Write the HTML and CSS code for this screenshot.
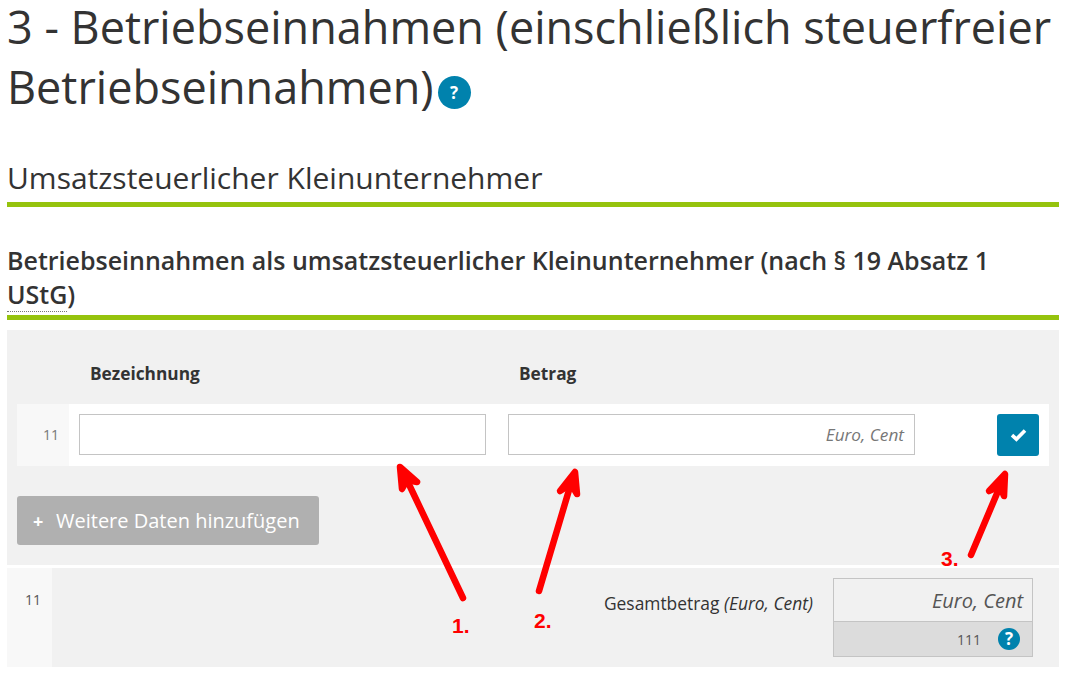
FILE: index.html
```html
<!DOCTYPE html>
<html lang="de">
<head>
    <meta charset="UTF-8">
    <meta name="viewport" content="width=device-width, initial-scale=1.0">
    <title>Betriebseinnahmen</title>
    <link rel="stylesheet" href="styles.css">
</head>
<body>
    <h1>3 - Betriebseinnahmen (einschließlich steuerfreier Betriebseinnahmen)<span class="help help-large">?</span></h1>

    <h2>Umsatzsteuerlicher Kleinunternehmer</h2>

    <h3>Betriebseinnahmen als umsatzsteuerlicher Kleinunternehmer (nach § 19 Absatz 1 <abbr class="abbr">UStG</abbr>)</h3>

    <!-- Table with entry row -->
    <div class="panel">
        <div class="head-row">
            <div class="head-label head-name">Bezeichnung</div>
            <div class="head-label">Betrag</div>
        </div>
        <div class="entry-row">
            <div class="row-num">11</div>
            <div class="field field-name"></div>
            <div class="field field-amount">Euro, Cent</div>
            <button class="confirm" type="button">
                <svg width="17" height="14" viewBox="0 0 17 14"><path d="M2 7.2 6.4 11.2 15 2.6" fill="none" stroke="#fff" stroke-width="3.6"/></svg>
            </button>
        </div>
        <button class="add-btn" type="button"><span class="plus">+</span>Weitere Daten hinzufügen</button>
    </div>

    <!-- Sum row -->
    <div class="sum-panel">
        <div class="sum-num">11</div>
        <div class="sum-label">Gesamtbetrag <em>(Euro, Cent)</em></div>
        <div class="sum-box">
            <div class="sum-value">Euro, Cent</div>
            <div class="sum-code">111<span class="help help-small">?</span></div>
        </div>
    </div>

    <!-- Red annotations on top of the page -->
    <svg class="arrows" width="1071" height="674" viewBox="0 0 1071 674">
        <g fill="#ff0000" stroke="#ff0000" stroke-width="6.5" stroke-linecap="round" stroke-linejoin="round">
            <path d="M463 598 405 476"/>
            <path d="M402 489 400 467 417 482 407 480Z"/>
            <path d="M539 591 572 480"/>
            <path d="M560 491 575 472 577 494 571 484Z"/>
            <path d="M971 555 1001 484"/>
            <path d="M989 491 1005 474 1004 496 1000 486Z"/>
        </g>
    </svg>
    <span class="mark mark-1">1.</span>
    <span class="mark mark-2">2.</span>
    <span class="mark mark-3">3.</span>
</body>
</html>
```

FILE: styles.css
```css
html, body {
    margin: 0;
    padding: 0;
}
body {
    position: relative;
    width: 1052px;
    height: 674px;
    padding-left: 7px;
    overflow: hidden;
    font-family: "Open Sans", sans-serif;
    color: #333;
    background: #fff;
}
h1 {
    margin: -3px 0 0;
    font-size: 45px;
    font-weight: 400;
    line-height: 60px;
}
h2 {
    margin: 41px 0 0;
    padding-bottom: 4px;
    border-bottom: 5px solid #95c30d;
    font-size: 30px;
    font-weight: 400;
    line-height: 40px;
}
h3 {
    margin: 36px 0 0;
    padding-bottom: 4px;
    border-bottom: 5px solid #95c30d;
    font-size: 25px;
    font-weight: 600;
    line-height: 34px;
}
.abbr {
    border-bottom: 1px dotted #777;
    text-decoration: none;
}
.help {
    display: inline-flex;
    align-items: center;
    justify-content: center;
    border-radius: 50%;
    background: #0082ad;
    color: #fff;
    font-weight: 700;
}
.help-large {
    width: 33px;
    height: 33px;
    margin-left: 4px;
    font-size: 17px;
    line-height: 33px;
    vertical-align: 5px;
}
.help-small {
    width: 22px;
    height: 22px;
    margin-left: 17px;
    font-size: 17px;
    line-height: 22px;
}
.panel {
    height: 235px;
    margin-top: 10px;
    padding: 0 10px;
    box-sizing: border-box;
    background: #f1f1f1;
}
.head-row {
    display: flex;
    height: 74px;
    align-items: flex-end;
    padding-bottom: 20px;
    box-sizing: border-box;
    padding-left: 73px;
}
.head-label {
    font-size: 17.3px;
    font-weight: 700;
    line-height: 20px;
}
.head-name {
    width: 429px;
}
.entry-row {
    display: flex;
    align-items: flex-start;
    height: 62px;
    background: #fff;
}
.row-num {
    width: 42px;
    height: 62px;
    padding-right: 10px;
    text-align: right;
    background: #f8f8f8;
    color: #777;
    font-size: 14px;
    line-height: 62px;
}
.field {
    box-sizing: border-box;
    height: 41px;
    margin-top: 10px;
    width: 407px;
    border: 1px solid #c4c4c4;
    background: #fff;
}
.field-name {
    margin-left: 10px;
    margin-right: 22px;
}
.field-amount {
    padding-right: 10px;
    text-align: right;
    color: #777;
    font-size: 17.2px;
    font-style: italic;
    line-height: 39px;
}
.confirm {
    display: flex;
    align-items: center;
    justify-content: center;
    width: 42px;
    height: 42px;
    margin: 10px 0 0 82px;
    padding: 0;
    border: none;
    border-radius: 3px;
    background: #0082ad;
}
.add-btn {
    display: block;
    width: 302px;
    height: 49px;
    margin-top: 30px;
    padding: 0 0 0 16px;
    border: none;
    border-radius: 3px;
    background: #b0b0b0;
    color: #fff;
    font-family: inherit;
    font-size: 20px;
    line-height: 49px;
    text-align: left;
}
.plus {
    display: inline-block;
    width: 23px;
    font-weight: 700;
    font-size: 18px;
}
.sum-panel {
    display: flex;
    height: 99px;
    margin-top: 3px;
    background: #f1f1f1;
}
.sum-num {
    width: 45px;
    height: 99px;
    padding-left: 18px;
    box-sizing: border-box;
    background: #f8f8f8;
    color: #555;
    font-size: 14px;
    line-height: 64px;
}
.sum-label {
    width: 761px;
    padding-top: 24px;
    text-align: right;
    font-size: 17.4px;
    line-height: 22px;
}
.sum-box {
    box-sizing: border-box;
    width: 200px;
    height: 79px;
    margin: 10px 0 0 20px;
    border: 1px solid #c4c4c4;
}
.sum-value {
    height: 42px;
    padding-right: 9px;
    border-bottom: 1px solid #c4c4c4;
    text-align: right;
    color: #555;
    font-size: 20px;
    font-style: italic;
    line-height: 44px;
}
.sum-code {
    display: flex;
    align-items: center;
    justify-content: flex-end;
    height: 34px;
    padding-right: 12px;
    background: #dcdcdc;
    color: #555;
    font-size: 14px;
}
.arrows {
    position: absolute;
    top: 0;
    left: 0;
}
.mark {
    position: absolute;
    color: #ff0000;
    font-family: "Liberation Sans", Arial, sans-serif;
    font-size: 21px;
    font-weight: 700;
    line-height: 20px;
}
.mark-1 {
    left: 452px;
    top: 616px;
}
.mark-2 {
    left: 534px;
    top: 611px;
}
.mark-3 {
    left: 941px;
    top: 549px;
}
```
